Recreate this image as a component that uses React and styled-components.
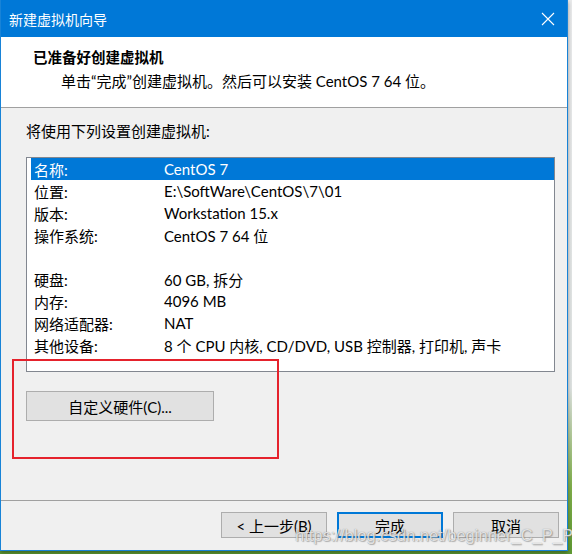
import React from "react"
import styled, { createGlobalStyle } from "styled-components"

const GlobalStyle = createGlobalStyle`
  html, body {
    margin: 0;
    padding: 0;
  }
  body {
    width: 572px;
    height: 554px;
    overflow: hidden;
    background: linear-gradient(180deg, #e9eaeb 0%, #dfe3e2 70%, #7fae4a 88%, #5f9a33 100%);
    font-family: Lato, "Noto Sans CJK SC", sans-serif;
  }
`

const Window = styled.div`
  position: relative;
  width: 568px;
  height: 551px;
  box-sizing: border-box;
  border-left: 1px solid #1883d7;
  border-right: 1px solid #1883d7;
  border-bottom: 1px solid #1883d7;
  background: #f0f0f0;
  display: flex;
  flex-direction: column;
  box-shadow: 0 2px 4px rgba(0, 0, 0, 0.35);
`

const TitleBar = styled.div`
  height: 37px;
  flex: none;
  background: #0078d7;
  color: #fff;
  display: flex;
  align-items: center;
  justify-content: space-between;
  padding: 0 12px 0 8px;
  font-size: 14px;
  font-family: "Noto Sans CJK SC", sans-serif;
`

const CloseIcon = () => (
  <svg width="14" height="14" viewBox="0 0 14 14">
    <path d="M1 1 L13 13 M13 1 L1 13" stroke="#fff" strokeWidth="1.1" fill="none" />
  </svg>
)

const Header = styled.div`
  height: 71px;
  flex: none;
  box-sizing: border-box;
  background: #fff;
  border-bottom: 1px solid #a0a0a0;
  padding: 10px 0 0 32px;
`

const Heading = styled.div`
  font-family: "Noto Sans CJK SC", sans-serif;
  font-weight: bold;
  font-size: 14.5px;
  line-height: 20px;
  color: #000;
`

const SubHeading = styled.div`
  font-size: 15px;
  line-height: 20px;
  margin-top: 4px;
  padding-left: 28px;
  color: #000;
`

const Body = styled.div`
  flex: 1;
  padding: 13px 12px 0 25px;
  display: flex;
  flex-direction: column;
`

const Intro = styled.div`
  font-size: 15px;
  line-height: 20px;
`

const ListBox = styled.div`
  margin-top: 16px;
  height: 215px;
  box-sizing: border-box;
  border: 1px solid #828790;
  background: #fff;
  padding: 0 0 0 4px;
`

const Row = styled.div`
  display: grid;
  grid-template-columns: 130px 1fr;
  height: 22px;
  align-items: center;
  padding-left: 3px;
  font-size: 15px;
  white-space: nowrap;
  background: ${(p) => (p.selected ? "#0078d7" : "transparent")};
  color: ${(p) => (p.selected ? "#fff" : "#000")};
`

const Button = styled.button`
  font-family: inherit;
  font-size: 15px;
  height: ${(p) => p.h || 26}px;
  width: ${(p) => p.w || 106}px;
  box-sizing: border-box;
  background: #e1e1e1;
  border: ${(p) => (p.primary ? "2px solid #0078d7" : "1px solid #adadad")};
  color: #000;
  padding: 0;
  display: flex;
  align-items: center;
  justify-content: center;
`

const CustomButton = styled(Button)`
  margin-top: 19px;
`

const Footer = styled.div`
  flex: none;
  height: 50px;
  box-sizing: border-box;
  border-top: 1px solid #a0a0a0;
  display: flex;
  justify-content: flex-end;
  gap: 10px;
  padding: 11px 8px 0 0;
`

const Annotation = styled.div`
  position: absolute;
  left: 11px;
  top: 359px;
  width: 267px;
  height: 100px;
  box-sizing: border-box;
  border: 2px solid #e5222c;
  pointer-events: none;
`

const Watermark = styled.div`
  position: absolute;
  left: 294px;
  top: 526px;
  font-family: "Liberation Sans", Arial, sans-serif;
  font-size: 16.5px;
  color: rgba(255, 255, 255, 0.75);
  text-shadow: 0 0 1px rgba(90, 90, 90, 0.7), 1px 1px 1px rgba(120, 120, 120, 0.5);
  pointer-events: none;
  white-space: nowrap;
`

const rows = [
  ["名称:", "CentOS 7"],
  ["位置:", "E:\\SoftWare\\CentOS\\7\\01"],
  ["版本:", "Workstation 15.x"],
  ["操作系统:", "CentOS 7 64 位"],
  ["", ""],
  ["硬盘:", "60 GB, 拆分"],
  ["内存:", "4096 MB"],
  ["网络适配器:", "NAT"],
  ["其他设备:", "8 个 CPU 内核, CD/DVD, USB 控制器, 打印机, 声卡"],
]

const App = () => (
  <>
    <GlobalStyle />
    <Window>
      <TitleBar>
        <span>新建虚拟机向导</span>
        <CloseIcon />
      </TitleBar>
      <Header>
        <Heading>已准备好创建虚拟机</Heading>
        <SubHeading>单击“完成”创建虚拟机。然后可以安装 CentOS 7 64 位。</SubHeading>
      </Header>
      <Body>
        <Intro>将使用下列设置创建虚拟机:</Intro>
        <ListBox>
          {rows.map(([label, value], i) => (
            <Row key={i} selected={i === 0}>
              <span>{label}</span>
              <span>{value}</span>
            </Row>
          ))}
        </ListBox>
        <CustomButton w={188} h={30}>自定义硬件(C)...</CustomButton>
      </Body>
      <Footer>
        <Button>&lt; 上一步(B)</Button>
        <Button primary>完成</Button>
        <Button>取消</Button>
      </Footer>
      <Annotation />
      <Watermark>https://blog.csdn.net/beginner_C_P_P</Watermark>
    </Window>
  </>
)

export default App
